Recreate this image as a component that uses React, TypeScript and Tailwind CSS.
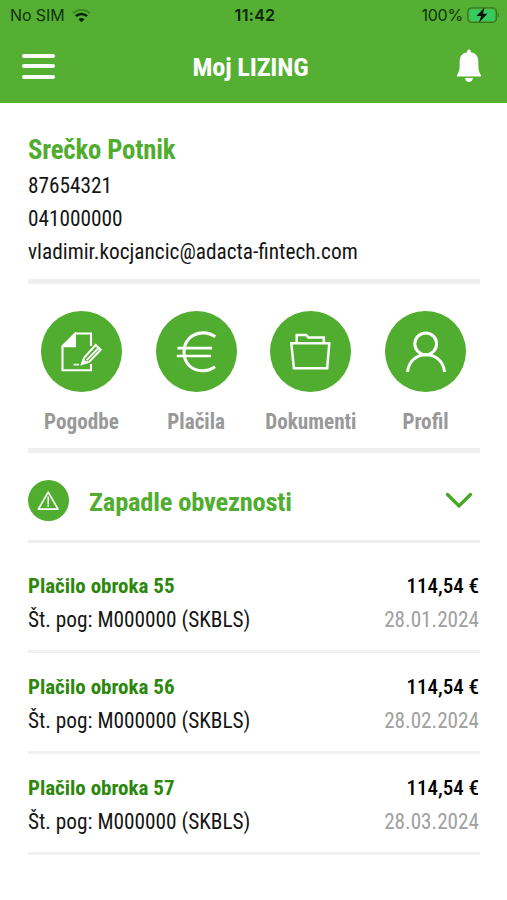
import React from 'react';

const actions = [
  { id: 'contracts', label: 'Pogodbe', icon: ContractIcon },
  { id: 'payments', label: 'Plačila', icon: EuroIcon },
  { id: 'documents', label: 'Dokumenti', icon: FolderIcon },
  { id: 'profile', label: 'Profil', icon: ProfileIcon },
];

const payments = [
  { id: 55, contract: 'M000000 (SKBLS)', amount: '114,54 €', date: '28.01.2024' },
  { id: 56, contract: 'M000000 (SKBLS)', amount: '114,54 €', date: '28.02.2024' },
  { id: 57, contract: 'M000000 (SKBLS)', amount: '114,54 €', date: '28.03.2024' },
];

function ContractIcon() {
  return (
    <svg width="81" height="81" viewBox="0 0 81 81" fill="none" stroke="white" strokeWidth="2.1">
      <path d="M50 35V22.5H34.2L21.5 35.2V59.3H50V53" />
      <path d="M34.2 22.5V35.5H21.5Z" fill="white" strokeWidth="1.4" />
      <path d="M32.5 53.6h5.5" strokeWidth="1.7" />
      <path d="M41.5 52l1.8-5.5L54.7 34l5 4.8L48 51Z" strokeWidth="2" />
      <path d="M45.6 49.2L57.5 37" strokeWidth="1.8" />
      <path d="M39.2 54.8l2.5-7 5.8 4Z" fill="white" stroke="none" />
    </svg>
  );
}

function EuroIcon() {
  return (
    <svg width="81" height="81" viewBox="0 0 81 81" fill="none" stroke="white" strokeWidth="3.1">
      <path d="M59.3 25.8C55.5 23 51 21.7 46.5 21.9C35.5 22.3 28 30 28 41C28 52.2 35.5 59.5 46.5 59.7C51 59.8 55.5 58.4 59 55.8" />
      <path d="M21.5 37.2H56M20.8 45H55" strokeWidth="2.7" />
    </svg>
  );
}

function FolderIcon() {
  return (
    <svg width="81" height="81" viewBox="0 0 81 81" fill="none" stroke="white" strokeWidth="2.5">
      <path d="M21.3 32.3H59.3L57.2 57.3H23.9Z" />
      <path d="M26.7 31V24.1H36.2L38.5 26.5H53.8V31" />
    </svg>
  );
}

function ProfileIcon() {
  return (
    <svg width="81" height="81" viewBox="0 0 81 81" fill="none" stroke="white" strokeWidth="3">
      <circle cx="40.7" cy="32.8" r="10.9" />
      <path d="M22.6 61C23.4 50.8 31 43.7 41 43.7S58.7 50.8 59.5 61" />
    </svg>
  );
}

function WarningIcon() {
  return (
    <svg width="41" height="41" viewBox="0 0 41 41" fill="none" stroke="white" strokeWidth="1.7" strokeLinejoin="round">
      <path d="M20.2 12.2L30 29.2H10.4Z" />
      <path d="M20.2 16.5V24.4M20.2 25.3V27" strokeWidth="1.5" />
    </svg>
  );
}

function StatusBar() {
  return (
    <div className="grid h-[28px] grid-cols-3 items-center pt-[3px] pr-[7px] pl-[10px] font-['Inter'] text-[16px] leading-[25px] text-[#10330a]">
      <div className="flex items-center gap-[7px]">
        <span className="tracking-[-0.1px]">No SIM</span>
        <svg width="19" height="14" viewBox="0 0 19 14" fill="none">
          <path d="M1 4.2C5.8-.3 13.2-.3 18 4.2" stroke="#3d8524" strokeWidth="2" />
          <path d="M3.9 7.2C7.1 4.2 11.9 4.2 15.1 7.2" stroke="#06200a" strokeWidth="2.4" />
          <path d="M6.5 10.2C8.2 8.7 10.8 8.7 12.5 10.2L9.5 13.3Z" fill="#06200a" />
        </svg>
      </div>
      <span className="text-center font-semibold tracking-[0.3px] text-[#0a2406]">11:42</span>
      <div className="flex items-center justify-end gap-[4px]">
        <span className="tracking-[-0.2px]">100%</span>
        <svg width="33" height="17" viewBox="0 0 33 17">
          <rect x="0.8" y="0.8" width="28.6" height="14.6" rx="4" fill="none" stroke="#34791f" strokeWidth="1.3" />
          <rect x="2.5" y="2.5" width="25.2" height="11.2" rx="2.5" fill="#35cb60" />
          <path d="M30.7 5.5C32.2 6.5 32.2 9.5 30.7 10.5Z" fill="#34791f" />
          <path d="M17.5 0.5L9.5 9H14L12 15.5L20.5 6.8H16Z" fill="#041504" />
        </svg>
      </div>
    </div>
  );
}

function Header() {
  return (
    <header className="h-[103px] bg-[#55af33]">
      <StatusBar />
      <div className="grid h-[75px] grid-cols-3 items-center pr-[25px] pl-[22px]">
        <button className="flex w-[33px] flex-col gap-[6.5px] pt-px">
          <span className="h-1 rounded-xs bg-white" />
          <span className="h-1 rounded-xs bg-white" />
          <span className="h-1 rounded-xs bg-white" />
        </button>
        <h1 className="pt-[3px] pr-[3px] text-center text-[26.3px] font-bold tracking-[-0.2px] whitespace-nowrap text-white">Moj LIZING</h1>
        <button className="justify-self-end">
          <svg width="26" height="34" viewBox="0 0 26 34" fill="white">
            <path d="M11.3 3.2V2.2C11.3 0 14.7 0 14.7 2.2V3.2C20 4 22.3 7.5 22.3 12.5C22.3 19 22.4 22.6 25 26V27.5H1V26C3.6 22.6 3.7 19 3.7 12.5C3.7 7.5 6 4 11.3 3.2Z" />
            <path d="M9 29H17C16.6 31.8 15 33 13 33S9.4 31.8 9 29Z" />
          </svg>
        </button>
      </div>
    </header>
  );
}

export default function App() {
  return (
    <div className="h-[900px] w-full overflow-hidden bg-white font-['Roboto_Condensed','Roboto','Liberation_Sans_Narrow',sans-serif] text-[21.3px] leading-[33px] text-[#151515] [font-stretch:75%]">
      <Header />
      <main className="pr-[27px] pl-7">
        <section className="h-[181px] border-b-[5px] border-[#efefef] pt-[31px]">
          <h2 className="mb-[2px] text-[26.8px] font-bold tracking-[-0.2px] text-[#50ad2f]">Srečko Potnik</h2>
          <p>87654321</p>
          <p>041000000</p>
          <p>vladimir.kocjancic@adacta-fintech.com</p>
        </section>

        <nav className="flex h-[169px] justify-between border-b-[5px] border-[#efefef] pt-[27px] pr-[14px] pl-[13px]">
          {actions.map((item) => (
            <button key={item.id} className="flex w-[81px] flex-col items-center">
              <span className="size-[81px] shrink-0 rounded-full bg-[#50ad2f]">
                <item.icon />
              </span>
              <span className="mt-[13px] text-[21.2px] font-bold whitespace-nowrap text-[#999]">{item.label}</span>
            </button>
          ))}
        </nav>

        <button className="flex h-[90px] w-full items-center border-b-[3px] border-[#efefef] pt-[8px] pr-[7px]">
          <span className="size-[41px] rounded-full bg-[#50ad2f]">
            <WarningIcon />
          </span>
          <span className="ml-[20px] pt-[2px] text-[26.5px] font-bold tracking-[-0.2px] text-[#50ad2f]">Zapadle obveznosti</span>
          <svg className="ml-auto" width="28" height="18" viewBox="0 0 28 18" fill="none" stroke="#45a824" strokeWidth="3.3" strokeLinecap="round">
            <path d="M2.5 2.5L14 14L25.5 2.5" />
          </svg>
        </button>

        <ul>
          {payments.map((item) => (
            <li key={item.id} className="flex h-[101px] justify-between border-b-[3px] border-[#f1f1f1] pt-[18px] first:h-[110px] first:pt-[27px]">
              <div>
                <p className="text-[21px] font-bold text-[#2c870d]">Plačilo obroka {item.id}</p>
                <p>Št. pog: {item.contract}</p>
              </div>
              <div className="pr-px text-right">
                <p className="text-[21px] font-medium text-black">{item.amount}</p>
                <p className="text-[21.2px] text-[#a0a0a0]">{item.date}</p>
              </div>
            </li>
          ))}
        </ul>
      </main>
    </div>
  );
}
